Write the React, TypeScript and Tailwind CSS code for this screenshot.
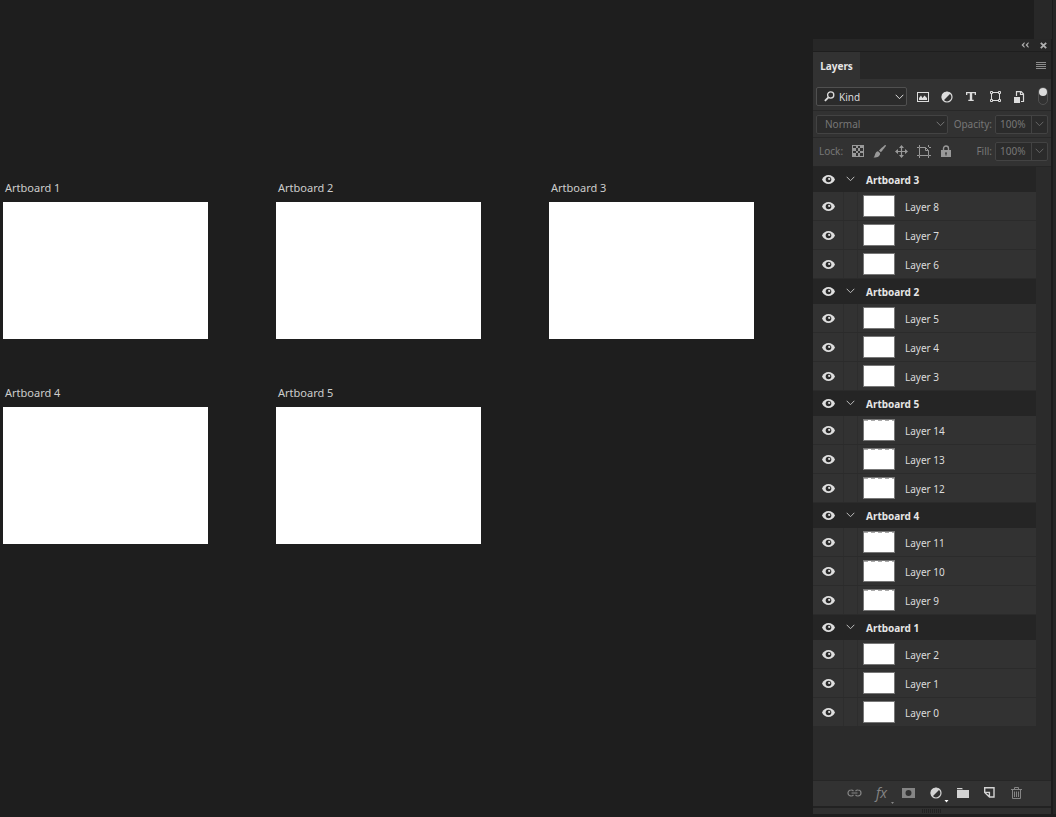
import React, { useState } from 'react';

type Group = {
  name: string;
  layers: string[];
  dashed?: boolean;
};

const groups: Group[] = [
  { name: 'Artboard 3', layers: ['Layer 8', 'Layer 7', 'Layer 6'] },
  { name: 'Artboard 2', layers: ['Layer 5', 'Layer 4', 'Layer 3'] },
  { name: 'Artboard 5', layers: ['Layer 14', 'Layer 13', 'Layer 12'], dashed: true },
  { name: 'Artboard 4', layers: ['Layer 11', 'Layer 10', 'Layer 9'], dashed: true },
  { name: 'Artboard 1', layers: ['Layer 2', 'Layer 1', 'Layer 0'] },
];

const artboards = ['Artboard 1', 'Artboard 2', 'Artboard 3', 'Artboard 4', 'Artboard 5'];

function Chevron({ className = '' }: { className?: string }) {
  return (
    <svg className={className} width="9" height="6" viewBox="0 0 9 6" fill="none" stroke="currentColor">
      <path d="M.7.8 4.5 4.7 8.3.8" />
    </svg>
  );
}

function IconButton({
  label,
  className = '',
  children,
}: {
  label: string;
  className?: string;
  children: React.ReactNode;
}) {
  return (
    <button type="button" aria-label={label} className={`flex shrink-0 items-center justify-center ${className}`}>
      {children}
    </button>
  );
}

function EyeButton({ name }: { name: string }) {
  const [visible, setVisible] = useState(true);

  return (
    <button
      type="button"
      aria-label={`Toggle visibility of ${name}`}
      aria-pressed={visible}
      onClick={() => setVisible(!visible)}
      className="flex h-full w-[30px] shrink-0 items-center justify-center text-[#dedede]"
    >
      {visible && (
        <svg width="13" height="9" viewBox="0 0 13 9">
          <path fill="currentColor" d="M6.5 0C3.7 0 1.3 1.7 0 4.5 1.3 7.300 3.700 9 6.500 9S11.700 7.300 13 4.500C11.700 1.700 9.300 0 6.500 0Z" />
          <circle cx="6.5" cy="4.5" r="2.800" fill="#2b2b2b" />
          <circle cx="7.200" cy="3.900" r="1.100" fill="currentColor" />
        </svg>
      )}
    </button>
  );
}

function AdjustIcon() {
  return (
    <svg width="12" height="12" viewBox="0 0 12 12">
      <circle cx="6" cy="6" r="5" fill="none" stroke="currentColor" strokeWidth="1.200" />
      <path d="M9.700 2.300A5.200 5.200 0 0 0 2.300 9.700Z" fill="currentColor" />
    </svg>
  );
}

function PercentField({ id, label }: { id: string; label: string }) {
  return (
    <div className="flex items-center gap-[3px]">
      <label htmlFor={id}>{label}</label>
      <div className="flex h-[19px] w-[53px] rounded-xs border border-[#434343] bg-[#2b2b2b]">
        <input id={id} defaultValue="100%" className="w-[35px] min-w-0 bg-transparent pl-1 outline-none" />
        <IconButton label={`${label} slider`} className="flex-1 border-l border-[#434343] text-[#666]">
          <Chevron />
        </IconButton>
      </div>
    </div>
  );
}

function FilterRow() {
  return (
    <div className="flex h-8 items-center border-b border-[#282828] px-[3px] pt-1 text-[#dcdcdc]">
      <div className="grid w-[91px] items-center">
        <select
          aria-label="Filter type"
          className="col-start-1 row-start-1 h-[19px] w-full appearance-none rounded-xs border border-[#505050] bg-[#2b2b2b] pl-[22px]"
        >
          <option>Kind</option>
        </select>
        <svg
          className="pointer-events-none col-start-1 row-start-1 ml-2"
          width="11"
          height="11"
          viewBox="0 0 11 11"
          fill="none"
          stroke="currentColor"
        >
          <circle cx="6.700" cy="4" r="3.100" strokeWidth="1.300" />
          <path d="M4.400 6.300.9 9.800" strokeWidth="1.800" />
        </svg>
        <Chevron className="pointer-events-none col-start-1 row-start-1 mr-[3px] justify-self-end" />
      </div>
      <div className="ml-1 flex flex-1">
        <IconButton label="Filter pixel layers" className="w-6">
          <svg width="12" height="10" viewBox="0 0 12 10" fill="none" stroke="currentColor">
            <rect x=".5" y=".5" width="11" height="9" />
            <path d="M2 8V6l2-2.500L5.500 6l2-2.500L10 6v2Z" fill="currentColor" stroke="none" />
          </svg>
        </IconButton>
        <IconButton label="Filter adjustment layers" className="w-6">
          <AdjustIcon />
        </IconButton>
        <IconButton label="Filter type layers" className="w-6">
          <svg width="10" height="9" viewBox="0 0 10 9" fill="currentColor">
            <path d="M0 0h10v3H8.700V1.300H6.200v6.500h1.500V9H2.300V7.800h1.500V1.300H1.300V3H0Z" />
          </svg>
        </IconButton>
        <IconButton label="Filter shape layers" className="w-6">
          <svg width="11" height="11" viewBox="0 0 11 11" fill="none" stroke="currentColor">
            <path d="M3 1.500h5M3 9.500h5M1.500 3v5M9.500 3v5" />
            <path d="M.5.500h2v2h-2ZM8.500.500h2v2h-2ZM.5 8.500h2v2h-2ZM8.500 8.500h2v2h-2Z" />
          </svg>
        </IconButton>
        <IconButton label="Filter smart objects" className="w-6">
          <svg width="11" height="12" viewBox="0 0 11 12" fill="none" stroke="currentColor">
            <path d="M2.500 5V.600h4.700L9.500 3v7.500H7M6.500.500V3.500h3" strokeWidth="1.200" />
            <path d="M0 6h6v6H0Z" fill="currentColor" stroke="none" />
          </svg>
        </IconButton>
        <button
          type="button"
          aria-label="Toggle layer filtering"
          className="-mt-[2px] ml-auto flex h-[18px] w-[10px] shrink-0 justify-center rounded-full border border-[#505050]"
        >
          <span className="size-2 shrink-0 rounded-full bg-[#dcdcdc]" />
        </button>
      </div>
    </div>
  );
}

function BlendRow() {
  return (
    <div className="flex h-[27px] items-center justify-between border-b border-[#282828] px-[3px] text-[#777]">
      <div className="grid w-[132px] items-center">
        <select
          aria-label="Blend mode"
          className="col-start-1 row-start-1 h-[19px] w-full appearance-none rounded-xs border border-[#434343] bg-[#2b2b2b] pl-2"
        >
          <option>Normal</option>
        </select>
        <Chevron className="pointer-events-none col-start-1 row-start-1 mr-[3px] justify-self-end" />
      </div>
      <PercentField id="opacity" label="Opacity:" />
    </div>
  );
}

function LockRow() {
  return (
    <div className="flex h-[29px] items-center justify-between border-b border-[#262626] px-[3px] pb-[2px] text-[#777]">
      <div className="flex items-center pl-[3px]">
        <span className="w-[24px]">Lock:</span>
        <div className="flex text-[#999]">
          <IconButton label="Lock transparent pixels" className="w-[22px] pl-[7px]">
            <svg width="12" height="12" viewBox="0 0 12 12">
              <rect x=".5" y=".5" width="11" height="11" fill="none" stroke="currentColor" />
              <path
                fill="currentColor"
                d="M4 1h2v2H4ZM8 1h3v2H8ZM1 3h3v3H1ZM6 3h2v3H6ZM4 6h2v2H4ZM8 6h3v2H8ZM1 8h3v3H1ZM6 8h2v3H6Z"
              />
            </svg>
          </IconButton>
          <IconButton label="Lock image pixels" className="w-[22px] pl-[7px]">
            <svg width="13" height="13" viewBox="0 0 13 13" fill="currentColor">
              <path d="M12.800.200c.4.500-.1 1.300-4.900 7.100L5.900 5.500C11 .8 12.200-.2 12.800.200Z" />
              <path d="M5.100 6.200 7.200 8.200c-.1 2.800-2.500 4.500-6.800 4.300C2.500 11.300 1.600 6.500 5.100 6.200Z" />
            </svg>
          </IconButton>
          <IconButton label="Lock position" className="w-[22px] pl-[7px]">
            <svg width="13" height="13" viewBox="0 0 13 13">
              <path d="M6.500 1.500v10M1.500 6.500h10" stroke="currentColor" strokeWidth="1.200" />
              <path
                fill="currentColor"
                d="M6.500 0 9 3H4ZM6.500 13 4 10h5ZM0 6.500 3 4v5ZM13 6.500 10 9V4Z"
              />
            </svg>
          </IconButton>
          <IconButton label="Lock artboard nesting" className="w-[23px] pl-[7px]">
            <svg width="14" height="13" viewBox="0 0 14 13" fill="none" stroke="currentColor">
              <path d="M2.500 0v2M0 2.500h2M11.500 0v2M12 2.500h2M2.500 11v2M0 10.500h2M11.500 11v2M12 10.500h2" />
              <path d="M2.500 2.500h6l3 3v5h-9ZM8.500 2.500v3h3" />
            </svg>
          </IconButton>
          <IconButton label="Lock all" className="w-[21px] pl-[7px]">
            <svg width="10" height="12" viewBox="0 0 10 12">
              <path d="M2.500 5.500V3.500a2.500 2.500 0 0 1 5 0v2" fill="none" stroke="currentColor" strokeWidth="1.400" />
              <path
                fill="currentColor"
                fillRule="evenodd"
                d="M0 5h10v7H0ZM4.500 7v1L4 8.500l.5.500v1.500h1V9l.5-.5-.5-.5V7Z"
              />
            </svg>
          </IconButton>
        </div>
      </div>
      <PercentField id="fill" label="Fill:" />
    </div>
  );
}

function Thumbnail({ dashed }: { dashed?: boolean }) {
  return (
    <div className="ml-[5px] h-[22px] w-8 border border-[#777] bg-white">
      {dashed && (
        <div className="h-px bg-[repeating-linear-gradient(90deg,#aaa_0_4px,#fff_4px_7px)]" />
      )}
    </div>
  );
}

function LayerGroup({ group }: { group: Group }) {
  const [open, setOpen] = useState(true);

  return (
    <li>
      <div className="flex h-[25px] items-center bg-[#252525] pb-px">
        <EyeButton name={group.name} />
        <button
          type="button"
          aria-label={`Expand ${group.name}`}
          aria-expanded={open}
          onClick={() => setOpen(!open)}
          className="flex h-full w-[15px] items-center justify-center text-[#bbb]"
        >
          <Chevron />
        </button>
        <span className="pt-px pl-2 font-bold text-[#e6e6e6]">{group.name}</span>
      </div>
      {open && (
        <ul>
          {group.layers.map((layer) => (
            <li key={layer} className="flex h-[29px] items-center border-b border-[#2b2b2b] bg-[#323232]">
              <EyeButton name={layer} />
              <div className="h-full w-[15px] border-x border-[#2d2d2d]" />
              <Thumbnail dashed={group.dashed} />
              <span className="pt-[2px] pl-[10px] text-[#dcdcdc]">{layer}</span>
            </li>
          ))}
        </ul>
      )}
    </li>
  );
}

function PanelFooter() {
  return (
    <div className="flex h-[26px] items-center justify-between border-t border-[#262626] bg-[#323232] pr-[25px] pb-[2px] pl-[28px] text-[#d4d4d4]">
      <IconButton label="Link layers" className="w-[27px] text-[#858585]">
        <svg width="15" height="8" viewBox="0 0 15 8" fill="none" stroke="currentColor" strokeWidth="1.200">
          <path d="M6.500 2.200A3 3 0 0 0 4 1a3 3 0 0 0 0 6 3 3 0 0 0 2.500-1.200M8.500 2.200A3 3 0 0 1 11 1a3 3 0 0 1 0 6 3 3 0 0 1-2.500-1.200M4.500 4h6" />
        </svg>
      </IconButton>
      <IconButton label="Layer style" className="relative w-[27px] text-[#858585]">
        <span className="font-['Open_Sans',sans-serif] text-[14px] leading-4 italic">fx</span>
        <svg className="absolute right-0 -bottom-1" width="5" height="3" viewBox="0 0 5 3" fill="currentColor">
          <path d="M1 0h3L2.500 2Z" />
        </svg>
      </IconButton>
      <IconButton label="Add layer mask" className="w-[27px] text-[#858585]">
        <svg width="13" height="10" viewBox="0 0 13 10">
          <path
            fill="currentColor"
            fillRule="evenodd"
            d="M0 0h13v10H0ZM6.500 2a3 3 0 1 0 0 6 3 3 0 0 0 0-6Z"
          />
        </svg>
      </IconButton>
      <IconButton label="New adjustment layer" className="relative w-[27px]">
        <AdjustIcon />
        <svg className="absolute right-0 -bottom-1" width="5" height="3" viewBox="0 0 5 3" fill="#fff">
          <path d="M.5 0h4l-2 2.500Z" />
        </svg>
      </IconButton>
      <IconButton label="New group" className="w-[27px]">
        <svg width="12" height="10" viewBox="0 0 12 10" fill="currentColor">
          <path d="M0 0h5l1 1.200H0ZM0 2h12v8H0Z" />
        </svg>
      </IconButton>
      <IconButton label="New layer" className="w-[27px]">
        <svg width="11" height="11" viewBox="0 0 11 11" fill="none" stroke="currentColor" strokeWidth="1.400">
          <path d="M.7 5V.7h9.300V10H5.500L.7 5.400H5.400V10" />
        </svg>
      </IconButton>
      <IconButton label="Delete layer" className="w-[27px] text-[#858585]">
        <svg width="11" height="12" viewBox="0 0 11 12" fill="none" stroke="currentColor">
          <path d="M0 2.500h11M3.500 2V.5h4V2M1.500 3v8.500h8V3M3.500 4.500v5.500M5.500 4.500v5.500M7.500 4.500v5.500" />
        </svg>
      </IconButton>
    </div>
  );
}

function LayersPanel() {
  return (
    <section
      aria-label="Layers"
      className="flex min-w-0 flex-1 flex-col border-r border-[#1c1c1c] bg-[#323232] font-['Noto_Sans',sans-serif] text-[10px] leading-[14px]"
    >
      <div className="flex h-[13px] items-center justify-end gap-[11px] border-b border-[#1e1e1e] bg-[#272727] pr-1 text-[#b0b0b0]">
        <IconButton label="Collapse panel">
          <svg width="8" height="6" viewBox="0 0 8 6" fill="currentColor">
            <path d="M3.500 0v1.700L2.200 3l1.300 1.300V6L.5 3ZM7.500 0v1.700L6.200 3l1.300 1.300V6l-3-3Z" />
          </svg>
        </IconButton>
        <IconButton label="Close panel">
          <svg width="7" height="7" viewBox="0 0 7 7" stroke="currentColor" strokeWidth="1.800">
            <path d="m.8.800 5.400 5.400M6.200.800.800 6.200" />
          </svg>
        </IconButton>
      </div>
      <div className="flex h-[27px] items-center justify-between bg-[#272727] pr-[5px]">
        <button type="button" className="h-full w-[47px] bg-[#323232] font-bold text-[#e6e6e6]">
          Layers
        </button>
        <IconButton label="Panel menu" className="text-[#8c8c8c]">
          <svg width="10" height="7" viewBox="0 0 10 7" fill="currentColor">
            <path d="M0 0h10v1H0ZM0 2h10v1H0ZM0 4h10v1H0ZM0 6h10v1H0Z" />
          </svg>
        </IconButton>
      </div>
      <FilterRow />
      <BlendRow />
      <LockRow />
      <div className="flex-1 bg-[#2b2b2b] pr-[15px]">
        <ul>
          {groups.map((group) => (
            <LayerGroup key={group.name} group={group} />
          ))}
        </ul>
      </div>
      <PanelFooter />
      <div className="flex h-2 items-center justify-center border-t-2 border-[#222] bg-[#303030]">
        <svg width="20" height="4" viewBox="0 0 20 4" stroke="#222">
          <path d="M.5 0v4M2.500 0v4M4.500 0v4M6.500 0v4M8.500 0v4M10.500 0v4M12.500 0v4M14.500 0v4M16.500 0v4M18.500 0v4" />
        </svg>
      </div>
    </section>
  );
}

export default function App() {
  return (
    <div className="flex min-h-screen bg-[#1e1e1e]">
      <main className="min-w-0 flex-1 overflow-hidden pt-[178px] pl-[3px] font-['Noto_Sans',sans-serif]">
        <div className="grid grid-cols-[repeat(3,205px)] gap-x-[68px] gap-y-11">
          {artboards.map((name) => (
            <figure key={name}>
              <figcaption className="h-6 pl-[2px] text-[11px] leading-5 text-[#cdcdcd]">{name}</figcaption>
              <div className="h-[137px] bg-white" />
            </figure>
          ))}
        </div>
      </main>
      <aside className="flex w-[243px] shrink-0 flex-col pb-[3px]">
        <div className="flex h-[39px] justify-end">
          <div className="w-[18px] bg-[#282828]" />
          <div className="w-1 border-l border-[#1c1c1c] bg-[#262626]" />
        </div>
        <div className="flex flex-1">
          <LayersPanel />
          <div className="w-1 border-l border-[#1c1c1c] bg-[#262626]" />
        </div>
      </aside>
    </div>
  );
}
